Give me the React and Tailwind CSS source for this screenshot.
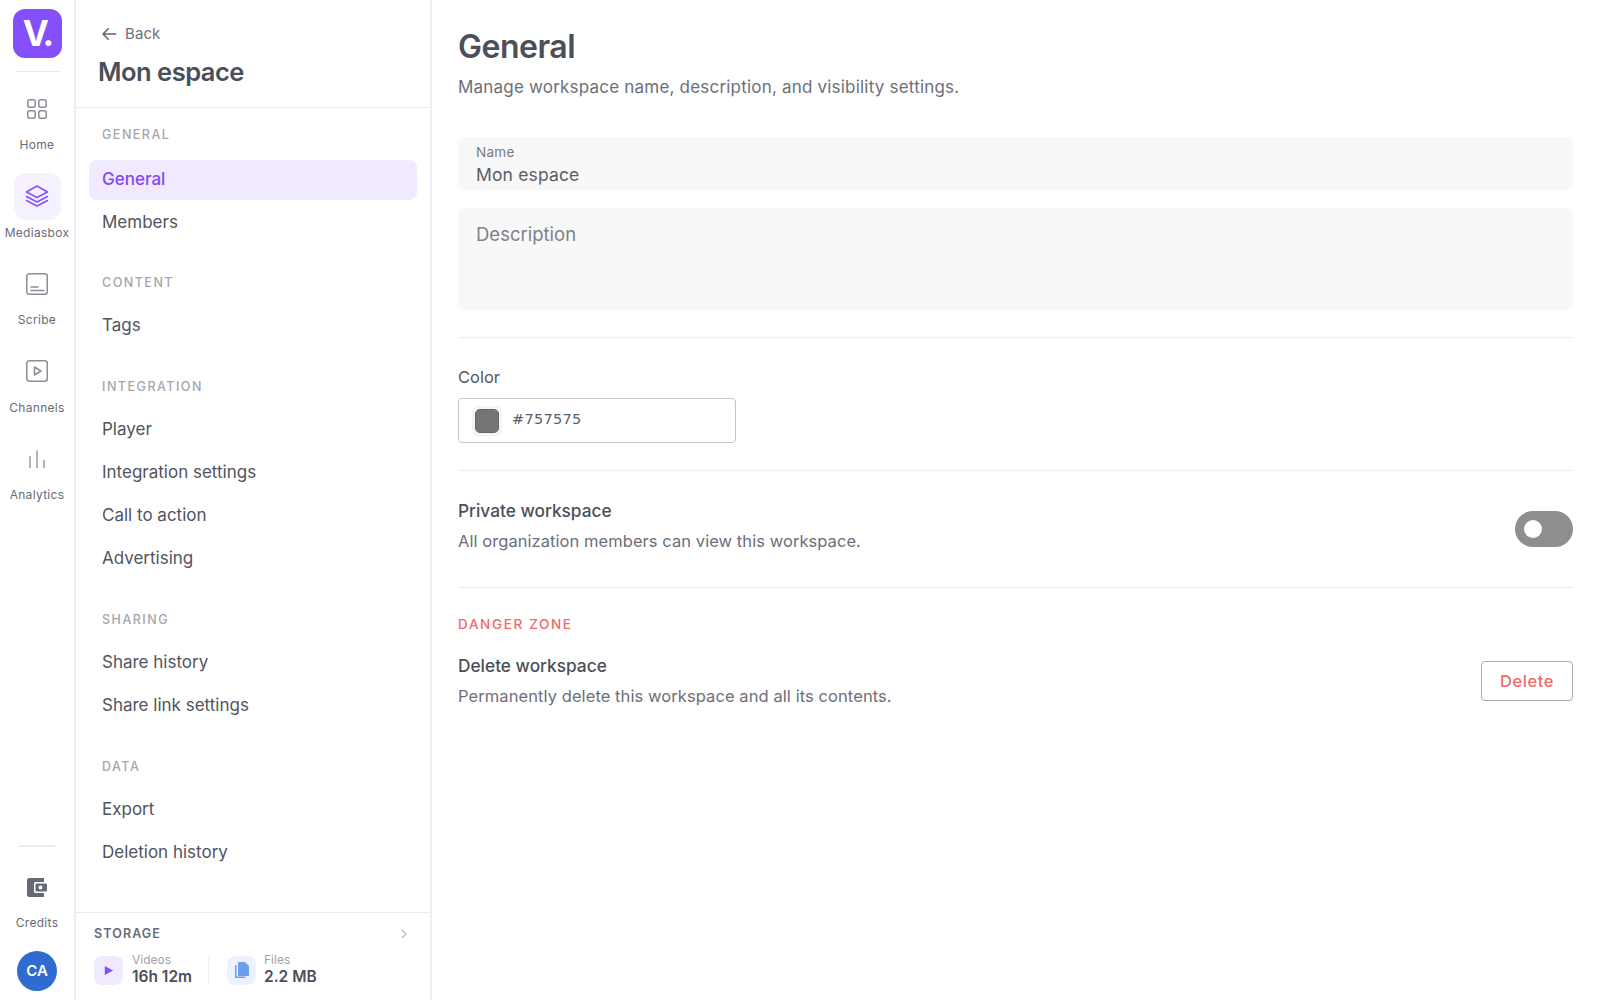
import React from "react";

const F = { fontFamily: "Inter, 'Noto Sans', sans-serif" };

function RailItem({ label, active, children }) {
  return (
    <div className="flex flex-col items-center h-[87.5px] shrink-0">
      <div className={`w-[47px] h-[47px] rounded-[12px] flex items-center justify-center ${active ? "bg-[#f5f1fe]" : ""}`}>
        {children}
      </div>
      <div className="mt-[3px] text-[12px] leading-[20px] tracking-[0.3px] text-[#686b75]">{label}</div>
    </div>
  );
}

function Section({ title, items, active, first }) {
  return (
    <div className={first ? "mb-[30px]" : "mb-[31px]"}>
      <div className={`px-[13px] h-[20px] flex items-center text-[12.5px] font-medium tracking-[1.5px] text-[#a3a6ad] uppercase ${first ? "mb-[15px]" : "mb-[13px]"}`}>{title}</div>
      <div className="flex flex-col gap-[3px]">
        {items.map((t) => (
          <div key={t} className={`h-[40px] px-[13px] rounded-[8px] flex items-center text-[17px] ${t === active ? "bg-[#f1eafe] text-[#8148f5] font-medium" : "text-[#50545f]"}`}>{t}</div>
        ))}
      </div>
    </div>
  );
}

const Stroke = { fill: "none", stroke: "#8b8e97", strokeWidth: 1.5, strokeLinecap: "round", strokeLinejoin: "round" };

export default function App() {
  return (
    <div style={F} className="flex h-[1000px] w-[1600px] bg-white overflow-hidden text-[#4b4f5a]">
      <aside className="w-[76px] shrink-0 border-r-2 border-[#f0f0f2] flex flex-col items-center pt-[9px] pb-[9px]">
        <div className="w-[49px] h-[49px] rounded-[12px] bg-[#8550fb] flex items-center justify-center text-white text-[35px] font-bold leading-none tracking-[-3px]">V.</div>
        <div className="w-[45px] h-px bg-[#e9e9ec] mt-[13px] mb-[13px]" />
        <RailItem label="Home">
          <svg width="24" height="24" viewBox="0 0 24 24" {...Stroke}>
            <rect x="2.75" y="2.75" width="7.5" height="7.5" rx="2" /><rect x="13.75" y="2.75" width="7.5" height="7.5" rx="2" /><rect x="2.75" y="13.75" width="7.5" height="7.5" rx="2" /><rect x="13.75" y="13.75" width="7.5" height="7.5" rx="2" />
          </svg>
        </RailItem>
        <RailItem label="Mediasbox" active>
          <svg width="24" height="24" viewBox="0 0 24 24" fill="none" stroke="#8550fb" strokeWidth="1.5" strokeLinecap="round" strokeLinejoin="round">
            <path d="M12 2 22.5 8 12 13.5 1.5 8Z" /><path d="M1.5 12.5 12 18l10.5-5.5" /><path d="M1.5 16.5 12 22l10.5-5.5" />
          </svg>
        </RailItem>
        <RailItem label="Scribe">
          <svg width="24" height="24" viewBox="0 0 24 24" {...Stroke}>
            <rect x="1.75" y="1.75" width="20.5" height="20.5" rx="2.5" /><path d="M6 15h7M6 18.5h13" />
          </svg>
        </RailItem>
        <RailItem label="Channels">
          <svg width="24" height="24" viewBox="0 0 24 24" {...Stroke}>
            <rect x="1.75" y="1.75" width="20.5" height="20.5" rx="2.5" /><path d="M9.5 8v8l6.5-4Z" />
          </svg>
        </RailItem>
        <RailItem label="Analytics">
          <svg width="24" height="24" viewBox="0 0 24 24" fill="none" stroke="#8b8e97" strokeWidth="1.3">
            <path d="M5 21V9M12 21V3.5M19 21v-8" />
          </svg>
        </RailItem>
        <div className="flex-1" />
        <div className="w-[36px] h-[2px] bg-[#ececef] mb-[31px]" />
        <div className="flex flex-col items-center">
          <svg width="20" height="19" viewBox="0 0 20 19">
            <path d="M2.5 0H17v5h3v9h-3v5H2.5A2.5 2.5 0 0 1 0 16.5v-14A2.5 2.5 0 0 1 2.5 0Z" fill="#666a75" />
            <rect x="7" y="4" width="14" height="11" rx="1.5" fill="#fff" />
            <rect x="8.5" y="5.5" width="11.5" height="8" rx="1" fill="#666a75" />
            <circle cx="13.5" cy="9.5" r="2" fill="#fff" />
          </svg>
          <div className="mt-[16px] text-[12px] leading-[20px] tracking-[0.3px] text-[#686b75]">Credits</div>
        </div>
        <div className="mt-[18px] w-[40px] h-[40px] rounded-full bg-[#2f6bd0] text-white flex items-center justify-center text-[15px] font-semibold">CA</div>
      </aside>

      <nav className="w-[356px] shrink-0 border-r-2 border-[#f0f0f2] flex flex-col">
        <div className="h-[108px] shrink-0 border-b border-[#ececef] pl-[22px] pt-[22px]">
          <div className="flex items-center gap-[7px] text-[15px] leading-[24px] text-[#6f727c] pl-[2px]">
            <svg width="18" height="18" viewBox="0 0 24 24" fill="none" stroke="#62656f" strokeWidth="2" strokeLinecap="round" strokeLinejoin="round"><path d="M21 12H4M11 5l-7 7 7 7" /></svg>
            <span className="tracking-[0.1px]">Back</span>
          </div>
          <div className="text-[25.5px] leading-[36px] mt-[8px] font-semibold tracking-[-0.5px] text-[#4b4f5a]">Mon espace</div>
        </div>
        <div className="flex-1 px-[13px] pt-[17px] min-h-0">
          <Section first title="General" items={["General", "Members"]} active="General" />
          <Section title="Content" items={["Tags"]} />
          <Section title="Integration" items={["Player", "Integration settings", "Call to action", "Advertising"]} />
          <Section title="Sharing" items={["Share history", "Share link settings"]} />
          <Section title="Data" items={["Export", "Deletion history"]} />
        </div>
        <div className="h-[88px] shrink-0 border-t border-[#ececef] pl-[18px] pr-[20px] pt-[11px]">
          <div className="flex items-center justify-between h-[20px]">
            <span className="text-[12.5px] font-semibold tracking-[1.1px] text-[#686b75]">STORAGE</span>
            <svg width="12" height="12" viewBox="0 0 24 24" fill="none" stroke="#b9bbc1" strokeWidth="2.5" strokeLinecap="round" strokeLinejoin="round"><path d="m9 5 7 7-7 7" /></svg>
          </div>
          <div className="flex items-center mt-[11px]">
            <div className="w-[29px] h-[29px] rounded-[8px] bg-[#f1eafe] flex items-center justify-center">
              <svg width="11" height="11" viewBox="0 0 12 12" fill="#8550fb"><path d="M2 1l9 5-9 5Z" /></svg>
            </div>
            <div className="ml-[9px] w-[76px] -mt-[2px]">
              <div className="text-[12px] leading-[14px] text-[#a0a3aa]">Videos</div>
              <div className="mt-[1px] text-[15.5px] leading-[18px] font-semibold text-[#4b4f5a]">16h 12m</div>
            </div>
            <div className="w-px h-[27px] bg-[#ececef]" />
            <div className="ml-[18px] w-[29px] h-[29px] rounded-[8px] bg-[#ebf2fe] flex items-center justify-center">
              <svg width="16" height="17" viewBox="0 0 16 17" fill="#6d9eee"><path d="M5 0h6l4 4v9a1 1 0 0 1-1 1H5a1 1 0 0 1-1-1V1a1 1 0 0 1 1-1Z" /><path d="M2.5 3v11.5h9V16H2a1 1 0 0 1-1-1V3Z" /></svg>
            </div>
            <div className="ml-[8px] -mt-[2px]">
              <div className="text-[12px] leading-[14px] text-[#a0a3aa]">Files</div>
              <div className="mt-[1px] text-[15.5px] leading-[18px] font-semibold text-[#4b4f5a]">2.2 MB</div>
            </div>
          </div>
        </div>
      </nav>

      <main className="flex-1 pl-[26px] pr-[27px] pt-[25px]">
        <h1 className="text-[32px] leading-[44px] font-semibold tracking-[-0.5px] text-[#4b4f5a]">General</h1>
        <p className="text-[17px] leading-[26px] mt-[5px] tracking-[0.2px] text-[#6c6f79]">Manage workspace name, description, and visibility settings.</p>

        <div className="mt-[37px] h-[53px] rounded-[6px] bg-[#f8f8f8] px-[18px] pt-[6px]">
          <div className="text-[13.5px] leading-[18px] tracking-[0.3px] text-[#777a83]">Name</div>
          <div className="mt-[2px] text-[17.5px] leading-[24px] tracking-[0.15px] text-[#5b5e69]">Mon espace</div>
        </div>
        <div className="mt-[18px] h-[102px] rounded-[6px] bg-[#f8f8f8] px-[18px] pt-[13px] text-[18.5px] leading-[26px] text-[#7e818a]">Description</div>
        <div className="h-px bg-[#ececef] mt-[27px]" />

        <div className="text-[16.5px] leading-[24px] mt-[27px] text-[#555863]">Color</div>
        <div className="mt-[9px] w-[278px] h-[45px] rounded-[4px] border border-[#c4c5ca] flex items-center pl-[13px]">
          <div className="w-[30px] h-[30px] rounded-[6px] bg-[#f5f5f5] flex items-center justify-center">
            <div className="w-[24px] h-[24px] rounded-[5px] bg-[#757575] border border-[#666]" />
          </div>
          <span className="ml-[10px] text-[14.5px] tracking-[0.3px] text-[#5b5e69] font-['DejaVu_Sans',sans-serif] -mt-[2px]">#757575</span>
        </div>
        <div className="h-px bg-[#ececef] mt-[27px]" />

        <div className="flex items-start justify-between mt-[27px]">
          <div>
            <div className="text-[17.3px] leading-[26px] font-[450] text-[#4b4f5a]">Private workspace</div>
            <div className="text-[16.5px] leading-[24px] mt-[5px] tracking-[0.06px] text-[#6c6f79]">All organization members can view this workspace.</div>
          </div>
          <div className="mt-[13px] w-[58px] h-[36px] rounded-full bg-[#8e8e8e] flex items-center pl-[9px]">
            <div className="w-[18px] h-[18px] rounded-full bg-white" />
          </div>
        </div>
        <div className="h-px bg-[#ececef] mt-[34px]" />

        <div className="text-[13.5px] leading-[20px] mt-[26px] font-medium tracking-[1.65px] text-[#f06a6a]">DANGER ZONE</div>
        <div className="flex items-center justify-between mt-[20px]">
          <div className="-mt-[1px]">
            <div className="text-[17.3px] leading-[26px] font-[450] text-[#4b4f5a]">Delete workspace</div>
            <div className="text-[16.5px] leading-[24px] mt-[5px] tracking-[0.08px] text-[#6c6f79]">Permanently delete this workspace and all its contents.</div>
          </div>
          <div className="w-[92px] h-[40px] rounded-[4px] border border-[#a9abb4] flex items-center justify-center text-[16.5px] font-medium tracking-[0.6px] text-[#f06a6a]">Delete</div>
        </div>
      </main>
    </div>
  );
}
